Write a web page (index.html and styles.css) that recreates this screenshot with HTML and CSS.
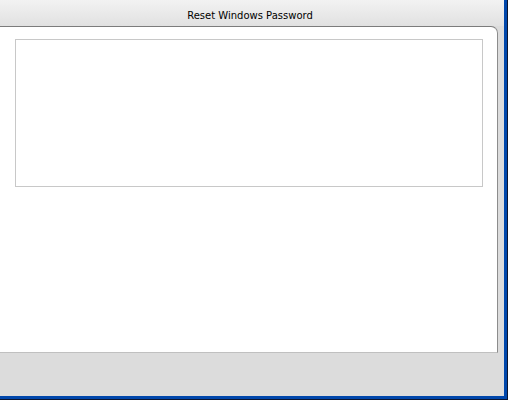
FILE: index.html
```html
<!DOCTYPE html>
<html>
<head>
<meta charset="utf-8">
<link rel="stylesheet" href="styles.css">
</head>
<body>
<div class="frame">
  <div class="window">
    <div class="titlebar"><span class="title">Reset Windows Password</span></div>
    <div class="main">
      <div class="panel">
        <div class="listbox"></div>
      </div>
    </div>
    <div class="footer"></div>
  </div>
</div>
</body>
</html>
```
FILE: styles.css
```css
html, body {
  margin: 0;
  padding: 0;
  background: #dcdcdc;
}
.frame {
  width: 507px;
  height: 399px;
  border-right: 1px solid #0b1630;
  border-bottom: 1px solid #0b1630;
}
.window {
  width: 504px;
  height: 396px;
  border-right: 3px solid #0047ab;
  border-bottom: 3px solid #0047ab;
  background: #dcdcdc;
  display: flex;
  flex-direction: column;
}
.titlebar {
  height: 26px;
  background: linear-gradient(#f2f2f2, #e1e1e1);
  display: flex;
  align-items: center;
  justify-content: center;
  font-family: "DejaVu Sans", sans-serif;
  font-size: 10px;
  color: #000;
  padding: 4px 4px 0 0;
  box-sizing: border-box;
}
.main {
  height: 327px;
  display: flex;
}
.panel {
  width: 498px;
  box-sizing: border-box;
  background: #fff;
  border-top: 1px solid #7c7c7c;
  border-right: 1px solid #8c8c8c;
  border-bottom: 1px solid #c0c0c0;
  border-top-right-radius: 7px;
  padding: 12px 0 0 15px;
}
.listbox {
  width: 468px;
  height: 148px;
  box-sizing: border-box;
  border: 1px solid #c8c8c8;
  background: #fff;
}
.footer {
  flex: 1;
}
```
